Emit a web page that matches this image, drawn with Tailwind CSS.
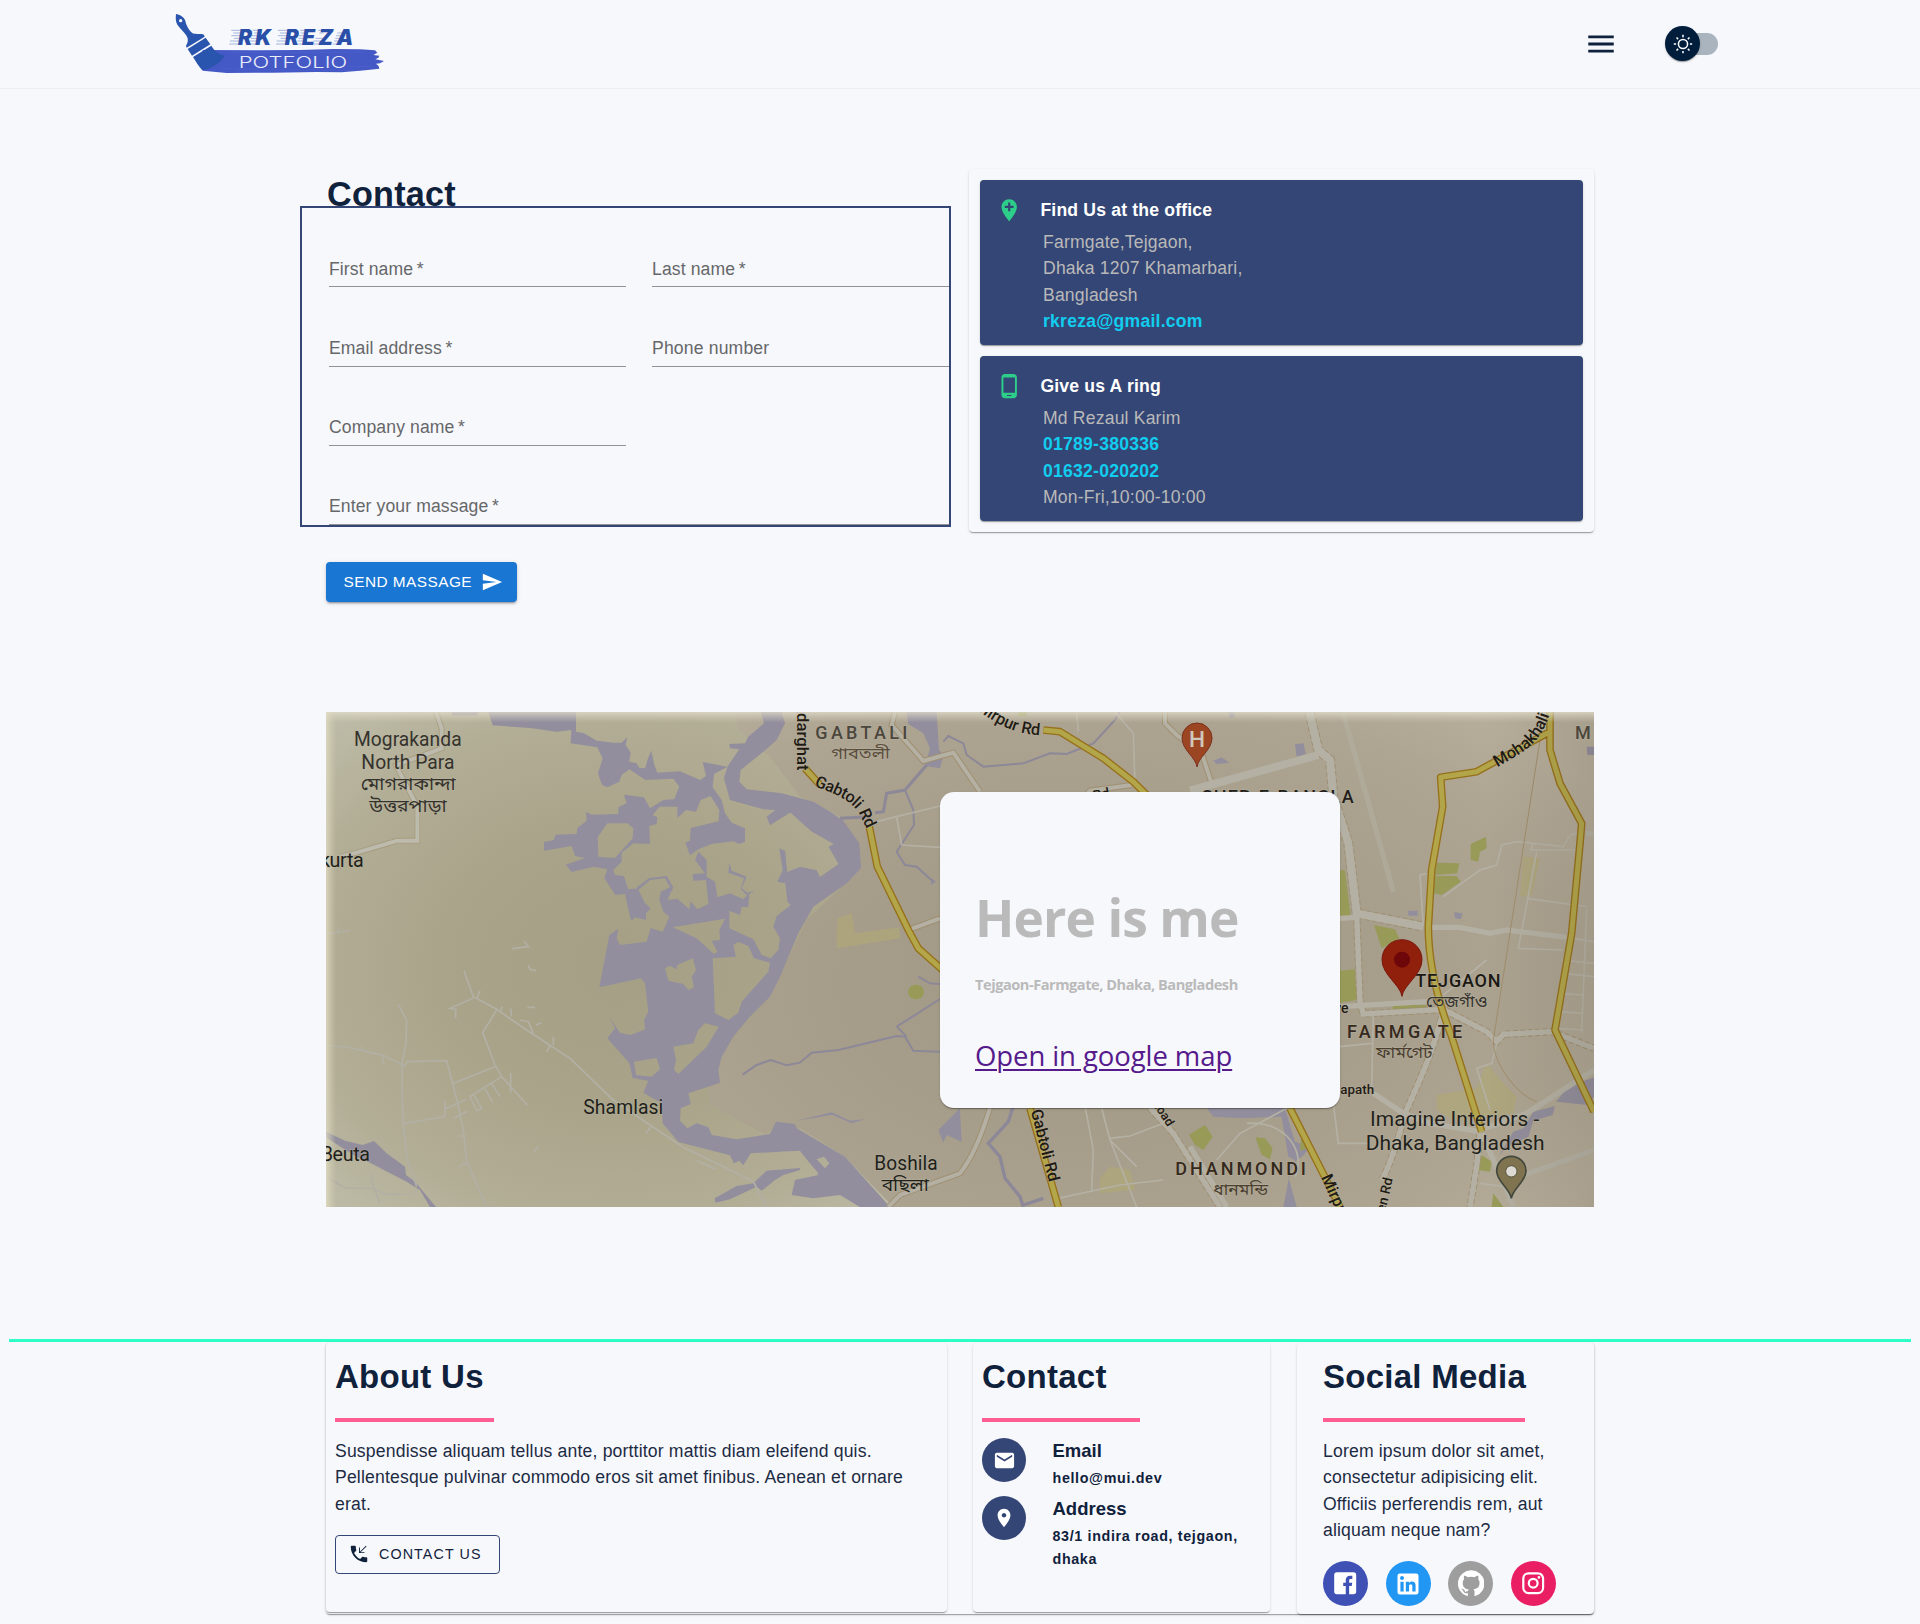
<!DOCTYPE html>
<html lang="en">
<head>
<meta charset="utf-8">
<title>Contact</title>
<script src="https://cdn.jsdelivr.net/npm/@tailwindcss/browser@4"></script>
</head>
<body class="bg-[#f7f8fc] text-[#10213b] font-['Liberation_Sans',Arial,sans-serif] text-[17.6px] leading-[26.4px] tracking-[0.01em] min-h-[1624px] overflow-x-hidden">

<header class="flex h-[89px] items-center justify-between border-b border-[#eceef3] pl-[160px] pr-[202px]">
  <svg class="h-[88px] w-[260px]" viewBox="0 0 780 264">
    <path fill="#4559c6" d="M128 150 L300 151 L420 150 L520 147 L600 148 L645 151 L652 158 L640 165 L658 167 L655 173 L646 178 L672 183 L660 190 L648 191 L656 198 L658 206 L630 209 L600 212 L545 217 L470 216 L340 218 L200 219 L128 212 Z"/>
    <path stroke="#5368d2" stroke-width="2" opacity=".6" d="M200 158H560M230 210H600M560 200H640M180 206H300M400 156H620"/>
    <path fill="#2a55ae" d="M48 42 C58 44 72 50 76 62 C78 75 88 92 98 100 C110 104 122 100 132 104 L134 110 L80 143 L78 137 C84 128 86 118 80 108 C72 94 60 86 52 74 C46 64 47 52 48 42 Z"/>
    <circle cx="62" cy="62" r="5" fill="#f7f8fc"/>
    <path fill="#2a55ae" d="M83 147 L137 113 L151 133 L96 167 Z M99 171 L154 137 C164 154 180 166 195 166 C186 184 160 206 127 211 C116 200 108 184 99 171 Z"/>
    <path stroke="#7d97cf" stroke-width="2" d="M214 91H250M220 99H248M214 107H244M222 115H242M210 123H240M208 132H238M278 91H300M282 99H296M276 107H292M272 115H290M270 123H290M268 132H288M354 91H388M360 99H386M354 107H382M362 115H382M350 123H378M348 132H376M420 91H446M422 99H444M416 107H440M416 115H436M412 123H436M410 132H434M474 91H500M478 99H490M466 115H490M460 123H488M458 132H486M532 99H554M528 107H550M526 115H546M522 123H542M518 132H534"/>
    <g fill="#2a4fa8" font-family="Inter, sans-serif" font-weight="900" font-style="italic" font-size="63">
      <text x="234" y="134" textLength="100">RK</text>
      <text x="374" y="134" textLength="206">REZA</text>
    </g>
    <text x="236" y="205" fill="#e9ecfb" font-family="Inter, sans-serif" font-weight="300" font-size="48" textLength="326" lengthAdjust="spacingAndGlyphs">POTFOLIO</text>
  </svg>
  <div class="flex items-center">
    <svg class="mr-[44px] size-[34px] fill-[#10213b]" viewBox="0 0 24 24"><path d="M3 18h18v-2H3v2zm0-5h18v-2H3v2zm0-7v2h18V6H3z"/></svg>
    <div class="relative flex h-[36px] w-[56px] items-center justify-end">
      <div class="h-[22px] w-[44px] rounded-full bg-[#aab4be]"></div>
      <div class="absolute left-[3px] top-0 flex size-[35px] items-center justify-center rounded-full bg-[#001e3c] shadow-[0_2px_1px_-1px_rgba(0,0,0,.2),0_1px_1px_rgba(0,0,0,.14),0_1px_3px_rgba(0,0,0,.12)]">
        <svg class="size-[22px] fill-white" viewBox="0 0 20 20"><path d="M9.305 1.667V3.75h1.389V1.667h-1.39zm-4.707 1.95l-.982.982L5.09 6.072l.982-.982-1.473-1.473zm10.802 0L13.927 5.09l.982.982 1.473-1.473-.982-.982zM10 5.139a4.872 4.872 0 00-4.862 4.86A4.872 4.872 0 0010 14.862 4.872 4.872 0 0014.86 10 4.872 4.872 0 0010 5.139zm0 1.389A3.462 3.462 0 0113.471 10a3.462 3.462 0 01-3.473 3.472A3.462 3.462 0 016.527 10 3.462 3.462 0 0110 6.528zM1.665 9.305v1.39h2.083v-1.39H1.666zm14.583 0v1.39h2.084v-1.39h-2.084zM5.09 13.928L3.616 15.4l.982.982 1.473-1.473-.982-.982zm9.82 0l-.982.982 1.473 1.473.982-.982-1.473-1.473zM9.305 16.25v2.083h1.389V16.25h-1.39z"/></svg>
      </div>
    </div>
  </div>
</header>

<main class="mx-auto w-[1268px] pt-[80px]">
  <section class="-ml-[26px] flex h-[433px] items-start justify-between">
    <div class="w-[651px]">
      <h2 class="flex h-[37px] items-start pl-[27px] pt-[5px] text-[34.2px] font-bold leading-[41px] tracking-[0.007em]">Contact</h2>
      <form class="relative h-[321px] border-2 border-[#344675] bg-[#f7f8fc] pl-[27px] text-[#666769] tracking-[0.006em]">
        <div class="grid grid-cols-[297px_297px] gap-x-[26px] leading-[24px]">
          <label class="flex h-[79px] items-end border-b border-[#929397] pb-[5px]">First name&thinsp;*</label>
          <label class="flex h-[79px] items-end border-b border-[#929397] pb-[5px]">Last name&thinsp;*</label>
          <label class="flex h-[80px] items-end border-b border-[#929397] pb-[6px]">Email address&thinsp;*</label>
          <label class="flex h-[80px] items-end border-b border-[#929397] pb-[6px] tracking-[0.009em]">Phone number</label>
          <label class="flex h-[79px] items-end border-b border-[#929397] pb-[6px]">Company name&thinsp;*</label>
          <label class="col-span-2 flex h-[79px] items-end border-b border-[#929397] pb-[6px]">Enter your massage&thinsp;*</label>
        </div>
      </form>
      <button type="button" class="ml-[26px] mt-[35px] flex h-[40px] w-[191px] items-center rounded-[4px] bg-[#1976d2] pl-[17.6px] text-[15.4px] tracking-[0.44px] text-white shadow-[0_3px_1px_-2px_rgba(0,0,0,.2),0_2px_2px_rgba(0,0,0,.14),0_1px_5px_rgba(0,0,0,.12)]">SEND MASSAGE
        <svg class="ml-[8.8px] size-[22px] fill-white" viewBox="0 0 24 24"><path d="M2.01 21 23 12 2.01 3 2 10l15 2-15 2z"/></svg>
      </button>
    </div>

    <div class="flex w-[625px] flex-col gap-[11px] rounded-[4px] p-[11px] shadow-[0_2px_1px_-1px_rgba(0,0,0,.2),0_1px_1px_rgba(0,0,0,.14),0_1px_3px_rgba(0,0,0,.12)]">
      <div class="h-[165px] rounded-[4px] bg-[#344675] pl-[16px] pt-[17px] shadow-[0_2px_1px_-1px_rgba(0,0,0,.2),0_1px_1px_rgba(0,0,0,.14),0_1px_3px_rgba(0,0,0,.12)]">
        <div class="flex items-center gap-[18px]">
          <svg class="size-[26.4px] fill-[#2dce89]" viewBox="0 0 24 24"><path d="M12 2C8.14 2 5 5.14 5 9c0 5.25 7 13 7 13s7-7.75 7-13c0-3.86-3.14-7-7-7zm4 8h-3v3h-2v-3H8V8h3V5h2v3h3v2z"/></svg>
          <span class="font-bold text-white">Find Us at the office</span>
        </div>
        <div class="pl-[47px] pt-[5.5px] text-[#b9b9b9]">
          <p>Farmgate,Tejgaon,</p><p>Dhaka 1207 Khamarbari,</p><p>Bangladesh</p><p class="font-bold text-[#11cdef] tracking-[0.013em]">rkreza@gmail.com</p>
        </div>
      </div>
      <div class="h-[165px] rounded-[4px] bg-[#344675] pl-[16px] pt-[17px] shadow-[0_2px_1px_-1px_rgba(0,0,0,.2),0_1px_1px_rgba(0,0,0,.14),0_1px_3px_rgba(0,0,0,.12)]">
        <div class="flex items-center gap-[18px]">
          <svg class="size-[26.4px] fill-[#2dce89]" viewBox="0 0 24 24"><path d="M16 1H8C6.34 1 5 2.34 5 4v16c0 1.66 1.34 3 3 3h8c1.66 0 3-1.34 3-3V4c0-1.66-1.34-3-3-3zm-2 20h-4v-1h4v1zm3.25-3H6.75V4h10.5v14z"/></svg>
          <span class="font-bold text-white">Give us A ring</span>
        </div>
        <div class="pl-[47px] pt-[5.5px] text-[#b9b9b9]">
          <p>Md Rezaul Karim</p><p class="font-bold text-[#11cdef] tracking-[0.013em]">01789-380336</p><p class="font-bold text-[#11cdef] tracking-[0.013em]">01632-020202</p><p>Mon-Fri,10:00-10:00</p>
        </div>
      </div>
    </div>
  </section>

  <section class="relative mt-[110px] h-[495px]">
    <!-- Map units are a third of a pixel -->
    <svg class="block h-[495px] w-[1268px]" viewBox="18 36 3804 1485" font-family="Roboto, 'Noto Sans Bengali', sans-serif">
      <defs>
        <radialGradient id="land" gradientUnits="userSpaceOnUse" cx="900" cy="800" r="1250" gradientTransform="translate(0 160) scale(1 .8)">
          <stop offset="0" stop-color="#a5a085"/><stop offset=".4" stop-color="#a9a389"/><stop offset=".75" stop-color="#b2ad95"/><stop offset="1" stop-color="#bdbba7"/>
        </radialGradient>
        <radialGradient id="city" gradientUnits="userSpaceOnUse" cx="2300" cy="850" r="1800" gradientTransform="translate(0 340) scale(1 .6)">
          <stop offset="0" stop-color="#a09884"/><stop offset=".45" stop-color="#a69d8b"/><stop offset=".8" stop-color="#ada492"/><stop offset="1" stop-color="#b6ad9b"/>
        </radialGradient>
        <linearGradient id="top" x1="0" y1="0" x2="0" y2="1"><stop offset="0" stop-color="#e4dfce" stop-opacity=".75"/><stop offset="1" stop-color="#d8d2bd" stop-opacity="0"/></linearGradient>
        <linearGradient id="left" x1="0" y1="0" x2="1" y2="0"><stop offset="0" stop-color="#e4dfc6" stop-opacity=".75"/><stop offset="1" stop-color="#d8d2b4" stop-opacity="0"/></linearGradient>
        <linearGradient id="right" x1="0" y1="0" x2="1" y2="0"><stop offset="0" stop-color="#3b3323" stop-opacity="0"/><stop offset="1" stop-color="#3b3323" stop-opacity=".12"/></linearGradient>
        <path id="gab1" d="M1482 258 C1540 280 1600 300 1622 350 C1634 375 1640 385 1644 400"/>
        <path id="mir1" d="M1965 22 C2020 70 2090 108 2178 106"/>
        <path id="gab2" d="M2132 1232 L2190 1460"/>
        <path id="moh" d="M3532 202 C3600 160 3660 140 3690 40 L3694 10"/>
      </defs>
      <rect x="18" y="36" width="3804" height="1485" fill="url(#land)"/>
      <path fill="url(#city)" d="M1245 36 H3822 V1521 H1720 L1575 1370 L1440 1285 L1330 1300 L1170 1215 L1165 1160 L1220 1040 L1350 890 L1460 660 L1623 505 L1560 350 L1440 290 L1350 170 L1255 90 Z"/>

      <g fill="#928e9d">
        <path d="M395 36H478L470 46H397Z M505 36H768V95L792 100 830 122 880 128 905 128 922 112 917 135 932 158 928 185 950 190 958 204 975 205 984 175 994 152 1003 195 1012 218 1080 214 1140 240 1158 228 1148 186 1222 200 1182 222 1178 262 1205 300 1215 340 1235 368 1275 385 1275 425 1258 432 1240 424 1175 432 1135 448 1110 466 1096 428 1110 422 1112 384 1196 364 1198 330 1172 288 1142 300 1128 335 1098 330 1072 354 1072 320 1018 320 998 346 1012 352 1010 372 988 378 990 432 940 430 905 458 905 485 880 510 885 525 912 528 924 568 955 565 958 575 975 610 992 625 978 640 978 660 945 652 935 662 930 650 915 582 886 585 853 535 862 508 822 500 755 516 737 494 795 474 765 468 755 438 672 452 672 426 702 420 706 404 770 402 772 384 800 362 798 336 815 344 895 342 895 322 920 310 912 284 972 292 990 325 1030 300 1062 298 1078 260 1060 236 976 240 928 208 905 225 898 245 862 262 846 255 834 220 848 175 832 142 752 130 754 90 710 95 630 84 518 76Z"/>
        <path d="M1322 36 1385 36 1395 70 1370 120 1330 155 1262 210 1258 245 1280 268 1385 280 1480 305 1535 338 1570 362 1618 430 1623 505 1580 550 1480 620 1435 700 1380 830 1350 890 1290 950 1240 1010 1205 1070 1195 1110 1200 1148 1105 1180 1112 1212 1082 1225 1080 1262 1102 1285 1130 1270 1165 1282 1175 1305 1250 1318 1350 1302 1368 1265 1425 1272 1430 1285 1575 1370 1710 1521 1620 1521 1560 1485 1480 1495 1415 1485 1425 1440 1495 1425 1440 1352 1292 1360 1270 1396 1258 1382 1242 1390 1230 1366 1075 1326 1028 1270 1025 1210 970 1178 985 1142 938 1134 928 1090 862 1015 885 985 870 955 900 998 932 1005 975 988 972 960 985 935 975 850 962 835 838 862 868 705 895 687 890 715 900 735 980 725 992 684 1028 696 1048 650 1030 635 1018 600 1022 575 1050 562 1035 535 990 540 955 570 950 562 988 534 1040 528 1060 562 1042 600 1072 596 1108 628 1112 604 1132 628 1165 612 1158 540 1120 542 1118 522 1155 520 1125 480 1135 455 1160 480 1160 530 1185 545 1192 592 1230 580 1270 598 1288 578 1285 622 1265 620 1260 645 1228 632 1228 685 1300 718 1325 765 1352 775 1375 750 1380 715 1360 680 1370 648 1412 615 1402 605 1396 550 1372 545 1388 510 1378 445 1396 452 1402 515 1440 500 1490 510 1500 530 1555 492 1525 440 1540 432 1475 395 1455 378 1410 338 1350 376 1340 350 1366 330 1330 328 1230 300 1212 235 1222 200 1258 148 1230 145 1228 132 1275 130 1285 110 1332 70Z"/>
        <path d="M1228 488 1235 512 1280 530 1265 565 1282 578 1305 572 1280 585 1262 568 1272 535 1225 518Z M18 1295 75 1322 128 1335 162 1323 200 1360 255 1400 258 1425 285 1445 348 1521 330 1521 300 1470 260 1445 150 1388 100 1365 18 1312Z M1184 1495 1250 1458 1300 1450 1340 1412 1440 1404 1440 1410 1390 1425 1365 1440 1325 1472 1310 1460 1230 1498 1186 1508Z"/>
        <path d="M1760 36H1850L1857 150 1870 165 1860 205 1815 198 1830 145 1810 100 1765 72Z M1855 1290 1920 1225V1235L1925 1325 1880 1305 1870 1328Z M1430 1262 1535 1237 1590 1262 1635 1258 1595 1270 1537 1244Z M1835 535 1848 545 1832 555Z M2660 1225H2895L2925 1325 2968 1340 2952 1365 2915 1392 2890 1521H2930L2905 1430 2925 1380 2905 1370 2885 1250 2760 1255 2680 1250Z M2725 36H2740L2745 50 2730 55Z M2925 133 2950 130 2958 162 2930 170Z M2680 182 2705 172 2728 188 2690 192Z M3265 632H3293V647H3265Z M3402 637 3428 640 3422 658 3405 655Z M3800 140H3822V165H3802Z M3822 1132 3745 1160 3708 1205 3805 1215 3822 1190Z M3535 1370 3580 1295 3610 1285 3640 1235 3705 1218 3698 1245 3640 1262 3625 1310 3560 1340Z"/>
      </g>

      <g fill="url(#land)">
        <path d="M835 470 833 412 862 370 922 370 940 385 938 415 885 474Z M1058 682 1215 656 1198 690 1200 720 1175 722 1192 755 1182 762 1130 715Z M1178 775 1248 770 1240 735 1255 726 1285 738 1302 775 1350 788 1345 815 1265 905 1255 938 1225 960 1185 940Z M1035 805 1050 797 1070 808 1072 795 1118 775 1128 810 1115 830 1122 862 1105 870 1090 852 1045 842Z M1060 1040 1120 1030 1135 990 1155 970 1196 980 1160 1040 1075 1122 1062 1110 1068 1080Z M942 1085 1010 1074 1020 1108 995 1130 948 1125Z M1412 338 1455 378 1475 395 1540 432 1525 440 1555 492 1500 530 1490 510 1440 500 1402 515 1396 452 1378 445 1370 400Z M1490 1378 1512 1370 1528 1390 1515 1405Z M1380 1355 1440 1355 1495 1420 1478 1428 1440 1395Z"/>
      </g>

      <!-- canals -->
      <g fill="none" stroke="#8d8898" stroke-width="6">
        <path d="M1268 1124 1310 1095 1352 1080 1400 1096 1440 1088 1475 1058 1555 1050 1730 1008 1755 1010 1780 1052 1860 1055M1730 980 1860 897M1730 980 1760 1010"/>
        <path stroke-width="9" d="M1560 355 1650 350M1665 338 1690 335 1700 280 1755 270 1820 195"/>
        <path d="M1755 270 1780 330 1782 375 1730 455 1755 495 1790 500 1840 545M1795 830 1830 850 1860 852M1870 125 1885 108 1930 130 1940 165 1990 200 2110 190 2190 160 2240 162 2320 130 2385 60 2398 36"/>
        <path stroke-width="10" d="M2078 1223 2065 1265 2005 1330 2040 1370 2055 1435 2100 1490 2110 1521M2110 1515 2170 1495"/>
      </g>

      <!-- parks -->
      <g fill="#989b58">
        <ellipse cx="1788" cy="876" rx="24" ry="22"/>
        <path d="M2607 1305 2630 1290 2655 1275 2678 1310 2650 1350 2625 1335Z M2806 1312 2835 1315 2858 1345 2850 1378 2825 1365Z M3060 510H3075L3092 650 3060 650Z M3060 812 3105 808 3110 900 3060 908Z M3350 488 3418 490 3412 520 3345 525Z M3340 528 3410 528 3422 545 3365 585 3340 580Z M3452 432 3498 410 3500 445 3480 455 3475 485 3452 480Z M3162 675 3225 688 3238 715 3185 745Z M3218 915H3320V925L3218 930Z M2945 1290 2965 1345 2940 1352Z M3485 1365 3515 1385 3510 1415 3475 1410Z M3520 1480 3550 1521H3515Z M2095 36H2120V48H2095Z"/>
      </g>
      <g fill="#afa778" opacity=".75">
        <path d="M1552 655 1595 640 1605 700 1738 682 1740 715 1550 745Z M2340 1435 2370 1400 2430 1410 2445 1470 2340 1480Z M3610 470 3660 475 3635 585 3600 590Z M3350 1185 3470 1165 3500 1090 3550 1150 3590 1190 3580 1240 3400 1260 3350 1230Z"/>
      </g>

      <!-- village lanes -->
      <g fill="none" stroke="#b2b0a5" stroke-width="5">
        <path d="M18 702 90 692M54 680V696M577 746 625 740 612 724M625 796 630 808 648 812M432 812 460 890 530 928 620 990 750 1075 880 1200 990 1275 1095 1345 1200 1395 1300 1445 1340 1521M460 894 390 925 407 928V955M530 930 488 998 525 1095 545 1130 622 1215M395 1152 525 1100M545 1130 450 1190 470 1232 485 1225 460 1182M235 914 260 960 258 1030 246 1090V1180L250 1272 262 1380 290 1460M18 1035 85 1042 190 1066 255 1098 262 1085 380 1082 412 1205 430 1290 440 1385 500 1521M250 1270 375 1250M375 1250V1202M375 1228 438 1198M400 1255 442 1234M18 1430 75 1464 160 1465 195 1483 275 1482 292 1470M152 1418 160 1460 180 1510M546 920 540 940M572 925 575 950M600 960 625 965 640 1000M664 968 648 975M700 1010V1035M680 1055 692 1035M480 872 470 898M495 1165 518 1208M515 1150 540 1190M572 1118V1180M125 1040 132 1055M188 1090 190 1066M415 1308H430M415 1402 440 1388M622 922H645M655 1338 642 1355M1130 1382 1188 1408M995 1278 978 1300"/>
        <path stroke="#a89c7e" stroke-width="17" d="M348 36 365 85V145L228 196 292 320V422H232L110 458 60 470"/>
        <path stroke="#bdbbae" stroke-width="12" d="M348 36 365 85V145L228 196 292 320V422H232L110 458 60 470"/>
      </g>

      <!-- minor streets -->
      <g fill="none" stroke="#b4b1a4">
        <path stroke-width="18" stroke="#a08f70" d="M1725 36 1715 75 1810 183 1900 158 1980 275M2535 36V70L2570 105 2645 160 2680 265M2010 1223C1990 1290 1960 1370 1920 1420L1740 1485 1705 1521M2260 325 2310 272 2435 255M1770 688 1860 655"/>
        <path stroke-width="12" d="M1725 36 1715 75 1810 183 1900 158 1980 275M2535 36V70L2570 105 2645 160 2680 265M2010 1223C1990 1290 1960 1370 1920 1420L1740 1485 1705 1521M2260 325 2310 272 2435 255M1770 688 1860 655"/>
        <g stroke="#9f8f72" stroke-dasharray="14 8">
          <path stroke-width="30" d="M2968 36 2995 150 3030 180 3040 290 3085 430 3110 640 3310 680"/>
          <path stroke-width="22" d="M2995 165 2610 272M3110 640 3120 905 3130 942 3370 928 3500 995 3530 1025 3550 1003 3695 995 3822 1045M3370 930C3340 1060 3290 1160 3255 1240 3240 1300 3210 1400 3185 1440M2490 1223 2560 1300 2700 1521M3480 1300 3470 1400 3450 1521"/>
        </g>
        <path stroke-width="24" d="M2968 36 2995 150 3030 180 3040 290 3085 430 3110 640 3310 680M2995 165 2610 272"/>
        <path stroke-width="16" d="M3110 640 3120 905 3130 942 3370 928 3500 995 3530 1025 3550 1003 3695 995 3822 1045M3060 655 3110 652M3330 682 3420 682 3510 700 3560 690 3740 712M3060 920 3320 905M3370 930C3340 1060 3290 1160 3255 1240 3240 1300 3210 1400 3185 1440M3160 1180 3250 1240 3330 1270 3480 1295M3480 1290 3620 1240 3822 1110M3480 1300 3470 1400 3450 1521M3485 1300 3560 1470 3580 1521M3600 1430 3822 1350M2490 1223 2560 1300 2700 1521M2610 1340 2720 1521M3800 400H3822"/>
        <path stroke-width="16" opacity=".5" d="M3070 40 3220 575"/>
        <path stroke-width="5" d="M1650 370 1720 352 1860 318M1730 352 1745 435 1860 442M2296 1223 2320 1350 2315 1470M2345 1225 2370 1320 2450 1400M2368 1315 2430 1308 2530 1270M2370 1320 2450 1521M2200 1498 2400 1455 2530 1440M2270 36 2275 95M2385 36 2440 100 2445 260M3320 520 3300 525 3310 680M3370 590 3480 510 3530 495 3545 435 3590 425 3730 440 3750 405 3780 398M3640 430 3632 450H3770M3650 455 3595 745 3730 750M3620 595 3800 620M3740 712 3822 725M3725 780 3822 790M3730 820 3822 830M3720 880 3790 885M3710 935 3790 940M3700 985 3790 990M3800 625 3785 1000M3160 942 3155 1170M3370 885 3500 780M3530 1030 3515 1090 3470 1105 3510 1230M3040 1210 3055 1330 3150 1330M2900 1225 2760 1300 2690 1380M2780 1270C2900 1260 2960 1360 2925 1430M3480 1450 3550 1460M3060 1040 3155 1030"/>
        <path stroke-width="3" stroke="#a18e6d" d="M3660 120 3520 1020C3520 1100 3600 1190 3650 1205"/>
      </g>

      <!-- arterial roads -->
      <g fill="none" stroke-linejoin="round">
        <g stroke="#96701a" stroke-width="23">
          <path d="M1455 205 1500 255M1648 380 1672 500 1765 690 1795 745 1870 812M2170 90 2220 95 2350 175 2440 245 2480 285M3690 36V150L3720 250 3785 370 3780 430 3755 700 3705 990 3822 1235M3690 95 3525 185 3470 215 3362 232 3368 320 3335 510 3325 680C3325 800 3360 920 3395 1010L3485 1295M2130 1225 2215 1521M2910 1225 3060 1521"/>
        </g>
        <g stroke="#b3a64a" stroke-width="15">
          <path d="M1455 205 1500 255M1648 380 1672 500 1765 690 1795 745 1870 812M2170 90 2220 95 2350 175 2440 245 2480 285M3690 36V150L3720 250 3785 370 3780 430 3755 700 3705 990 3822 1235M3690 95 3525 185 3470 215 3362 232 3368 320 3335 510 3325 680C3325 800 3360 920 3395 1010L3485 1295M2130 1225 2215 1521M2910 1225 3060 1521"/>
        </g>
      </g>

      <rect x="3500" y="36" width="322" height="1485" fill="url(#right)"/>
      <rect x="18" y="36" width="3804" height="32" fill="url(#top)"/>
      <rect x="18" y="36" width="30" height="1485" fill="url(#left)"/>

      <!-- labels -->
      <g fill="#34322c" font-size="59" stroke="#bbb6a2" stroke-opacity=".45" stroke-width="4" paint-order="stroke">
        <text x="102" y="139" textLength="323" lengthAdjust="spacingAndGlyphs">Mograkanda</text>
        <text x="124" y="206" textLength="280" lengthAdjust="spacingAndGlyphs">North Para</text>
        <text x="122" y="270" font-size="54" textLength="285" lengthAdjust="spacingAndGlyphs">মোগরাকান্দা</text>
        <text x="148" y="336" font-size="54" textLength="232" lengthAdjust="spacingAndGlyphs">উত্তরপাড়া</text>
        <g fill="#211f1b">
          <text x="130" y="501" text-anchor="end" letter-spacing="-1">kurta</text>
          <text x="149" y="1384" text-anchor="end" letter-spacing="-1">Beuta</text>
          <text x="790" y="1243" textLength="240" lengthAdjust="spacingAndGlyphs">Shamlasi</text>
          <text x="1663" y="1410" textLength="190" lengthAdjust="spacingAndGlyphs">Boshila</text>
          <text x="1685" y="1473" font-size="52" textLength="142" lengthAdjust="spacingAndGlyphs">বছিলা</text>
          <text x="3150" y="1279" font-size="62" textLength="508" lengthAdjust="spacingAndGlyphs">Imagine Interiors -</text>
          <text x="3137" y="1349" font-size="62" textLength="537" lengthAdjust="spacingAndGlyphs">Dhaka, Bangladesh</text>
        </g>
        <g font-weight="500" font-size="54">
          <text x="1486" y="117" fill="#4b463d" textLength="276">GABTALI</text>
          <text x="2566" y="1425" fill="#35291d" textLength="392">DHANMONDI</text>
          <text x="2645" y="310" fill="#211f1b" textLength="456">SHER-E-BANGLA</text>
          <text x="3286" y="862" fill="#1b1814" textLength="256">TEJGAON</text>
          <text x="3081" y="1013" fill="#35291d" textLength="346">FARMGATE</text>
          <text x="3765" y="116" fill="#4b463d">M</text>
        </g>
        <g font-size="48">
          <text x="1534" y="177" fill="#5a4d3d" textLength="176" lengthAdjust="spacingAndGlyphs">গাবতলী</text>
          <text x="2680" y="1486" fill="#4b3f30" textLength="164" lengthAdjust="spacingAndGlyphs">ধানমন্ডি</text>
          <text x="3318" y="922" textLength="184" lengthAdjust="spacingAndGlyphs">তেজগাঁও</text>
          <text x="3168" y="1073" fill="#4b3f30" textLength="170" lengthAdjust="spacingAndGlyphs">ফার্মগেট</text>
        </g>
        <g font-size="49" font-weight="500" fill="#1f1b14">
          <text transform="translate(1432 12) rotate(90)" textLength="200" lengthAdjust="spacingAndGlyphs">adarghat</text>
          <text letter-spacing="-1.5"><textPath href="#gab1">Gabtoli Rd</textPath></text>
          <text letter-spacing="0"><textPath href="#mir1">Mirpur Rd</textPath></text>
          <text letter-spacing="-.5"><textPath href="#gab2">Gabtoli Rd</textPath></text>
          <text letter-spacing="0"><textPath href="#moh">Mohakhali</textPath></text>
          <text transform="translate(2495 1208) rotate(57)" font-size="38">Road</text>
          <text transform="translate(3003 1432) rotate(66)">Mirpur Rd</text>
          <text transform="translate(3190 1560) rotate(-77)" font-size="41">een Rd</text>
          <text x="3086" y="940" text-anchor="end" font-size="42">Ave</text>
          <text x="3163" y="1182" text-anchor="end" font-size="40">Janapath</text>
          <text transform="translate(2322 302) rotate(-12)" font-size="42">Rd</text>
        </g>
      </g>

      <!-- pins -->
      <path fill="#9c4522" stroke="#7c2f1c" stroke-width="3" d="M2631 201C2628 172 2586 150 2586 114A45 45 0 0 1 2676 114C2676 150 2634 172 2631 201Z"/>
      <text x="2631" y="142" text-anchor="middle" font-size="68" font-weight="500" fill="#cfc8ba">H</text>
      <path fill="#901f0b" stroke="#7a170c" stroke-width="3" d="M3246 889C3242 855 3186 825 3186 779A60 60 0 0 1 3306 779C3306 825 3250 855 3246 889Z"/>
      <circle cx="3246" cy="779" r="24" fill="#6d0709"/>
      <path fill="#80734f" stroke="#43483c" stroke-width="5" d="M3574 1495C3570 1465 3530 1445 3530 1413A44 44 0 0 1 3618 1413C3618 1445 3578 1465 3574 1495Z"/>
      <circle cx="3574" cy="1414" r="17" fill="#dcdad3" stroke="#55543f" stroke-width="3"/>
    </svg>

    <div class="absolute left-[614px] top-[80px] flex h-[316px] w-[400px] flex-col items-start rounded-[14px] bg-[#f7f8fc] pl-[35px] pt-[87px] font-['Open_Sans','Noto_Sans',sans-serif] shadow-[0_2px_1px_-1px_rgba(0,0,0,.2),0_1px_1px_rgba(0,0,0,.14),0_1px_3px_rgba(0,0,0,.12)]">
      <h1 class="whitespace-nowrap text-[51.5px] font-bold leading-[76px] tracking-[-0.018em] text-[#bababa]">Here is me</h1>
      <p class="mt-[17px] whitespace-nowrap text-[14.6px] font-bold leading-[24px] tracking-[-0.032em] text-[#bababa]">Tejgaon-Farmgate, Dhaka, Bangladesh</p>
      <a class="mt-[40px] whitespace-nowrap text-[27.5px] leading-[40px] tracking-[-0.003em] text-[#551a8b] underline decoration-2 underline-offset-[3px]">Open in google map</a>
    </div>
  </section>
</main>

<footer class="mx-[9px] mt-[132px] border-t-[3px] border-[#2effc7]">
  <div class="mx-auto flex h-[272px] w-[1268px] items-start rounded-[4px] pt-px shadow-[0_2px_1px_-1px_rgba(0,0,0,.2),0_1px_1px_rgba(0,0,0,.14),0_1px_3px_rgba(0,0,0,.12)]">
    <div class="h-[269px] w-[621px] rounded-[4px] pl-[9px] pt-[14px] shadow-[0_2px_1px_-1px_rgba(0,0,0,.2),0_1px_1px_rgba(0,0,0,.14),0_1px_3px_rgba(0,0,0,.12)]">
      <h3 class="text-[33px] font-bold leading-[40px] tracking-[0.008em]">About Us</h3>
      <div class="mt-[21px] h-[4px] w-[159px] bg-[#ff5e95]"></div>
      <p class="mt-[16px] w-[600px] text-[#1c2b43] tracking-[0.0095em]">Suspendisse aliquam tellus ante, porttitor mattis diam eleifend quis.<br>Pellentesque pulvinar commodo eros sit amet finibus. Aenean et ornare<br>erat.</p>
      <button type="button" class="mt-[17.5px] flex h-[39px] w-[165px] items-center rounded-[4px] border border-[#344675] pl-[12px] text-[14.3px] tracking-[1.1px]">
        <svg class="mr-[9px] size-[22px] fill-[#10213b]" viewBox="0 0 24 24"><path d="M20 15.5c-1.25 0-2.45-.2-3.57-.57-.1-.03-.21-.05-.31-.05-.26 0-.51.1-.71.29l-2.2 2.2c-2.83-1.44-5.15-3.75-6.59-6.58l2.2-2.21c.28-.27.36-.66.25-1.01C8.7 6.45 8.5 5.25 8.5 4c0-.55-.45-1-1-1H4c-.55 0-1 .45-1 1 0 9.39 7.61 17 17 17 .55 0 1-.45 1-1v-3.5c0-.55-.45-1-1-1zM20.200 3.700l-.7-.7L13 9.500V5h-1v6h6v-1h-4.300z"/></svg>CONTACT US
      </button>
    </div>

    <div class="ml-[26px] h-[269px] w-[297px] rounded-[4px] pl-[9px] pt-[14px] shadow-[0_2px_1px_-1px_rgba(0,0,0,.2),0_1px_1px_rgba(0,0,0,.14),0_1px_3px_rgba(0,0,0,.12)]">
      <h3 class="text-[33px] font-bold leading-[40px] tracking-[0.008em]">Contact</h3>
      <div class="mt-[21px] h-[4px] w-[158px] bg-[#ff5e95]"></div>
      <div class="mt-[16px] flex gap-[26.5px]">
        <div class="flex size-[44px] shrink-0 items-center justify-center rounded-full bg-[#344675]"><svg class="size-[23px] fill-white" viewBox="0 0 24 24"><path d="M20 4H4c-1.100 0-2 .9-2 2v12c0 1.100.9 2 2 2h16c1.100 0 2-.9 2-2V6c0-1.100-.9-2-2-2zm0 4-8 5-8-5V6l8 5 8-5v2z"/></svg></div>
        <div class="font-bold"><p class="text-[18.5px] leading-[26px] tracking-normal">Email</p><p class="mt-[3px] text-[14.3px] leading-[22.3px] tracking-[0.65px]">hello@mui.dev</p></div>
      </div>
      <div class="mt-[7px] flex gap-[26.5px]">
        <div class="flex size-[44px] shrink-0 items-center justify-center rounded-full bg-[#344675]"><svg class="size-[22px] fill-white" viewBox="0 0 24 24"><path d="M12 2C8.130 2 5 5.130 5 9c0 5.250 7 13 7 13s7-7.750 7-13c0-3.870-3.130-7-7-7zm0 9.500c-1.380 0-2.500-1.120-2.500-2.500s1.120-2.500 2.500-2.500 2.500 1.120 2.500 2.500-1.120 2.500-2.500 2.500z"/></svg></div>
        <div class="font-bold"><p class="text-[18.5px] leading-[26px] tracking-normal">Address</p><p class="mt-[3px] text-[14.3px] leading-[22.3px] tracking-[0.65px]">83/1 indira road, tejgaon,<br>dhaka</p></div>
      </div>
    </div>

    <div class="ml-[27px] h-[271px] w-[297px] rounded-[4px] pl-[26px] pt-[14px] shadow-[0_2px_1px_-1px_rgba(0,0,0,.2),0_1px_1px_rgba(0,0,0,.14),0_1px_3px_rgba(0,0,0,.12)]">
      <h3 class="text-[33px] font-bold leading-[40px] tracking-[0.008em]">Social Media</h3>
      <div class="mt-[21px] h-[4px] w-[202px] bg-[#ff5e95]"></div>
      <p class="mt-[16px] text-[#1c2b43] tracking-[0.0095em]">Lorem ipsum dolor sit amet,<br>consectetur adipisicing elit.<br>Officiis perferendis rem, aut<br>aliquam neque nam?</p>
      <div class="mt-[17.5px] flex gap-[17.7px]">
        <span class="flex size-[45px] items-center justify-center rounded-full bg-[#3f51b5]"><svg class="size-[26.4px] fill-white" viewBox="0 0 24 24"><path d="M19.500 2h-15A2.500 2.500 0 0 0 2 4.500v15A2.500 2.500 0 0 0 4.500 22H12.500v-7.500H10.200v-3h2.300V9.300C12.500 6.700 14 5.300 16.300 5.300h2.200v2.900h-1.400c-1.200 0-1.500.6-1.500 1.500v1.800h2.800l-.5 3h-2.300V22h3.900a2.500 2.500 0 0 0 2.500-2.500v-15A2.500 2.500 0 0 0 19.500 2z"/></svg></span>
        <span class="flex size-[45px] items-center justify-center rounded-full bg-[#2196f3]"><svg class="size-[28px] fill-white" viewBox="0 0 24 24"><path d="M19 3a2 2 0 0 1 2 2v14a2 2 0 0 1-2 2H5a2 2 0 0 1-2-2V5a2 2 0 0 1 2-2h14m-.5 15.500v-5.300a3.260 3.260 0 0 0-3.260-3.260c-.85 0-1.840.52-2.320 1.300v-1.110h-2.790v8.370h2.790v-4.930c0-.77.62-1.400 1.390-1.400a1.400 1.400 0 0 1 1.400 1.400v4.930h2.790M6.880 8.560a1.680 1.680 0 0 0 1.680-1.680c0-.93-.75-1.690-1.680-1.690a1.690 1.690 0 0 0-1.690 1.690c0 .93.76 1.680 1.690 1.680m1.390 9.940v-8.370H5.500v8.370h2.770z"/></svg></span>
        <span class="flex size-[45px] items-center justify-center rounded-full bg-[#9e9e9e]"><svg class="size-[26.4px] fill-white" viewBox="0 0 24 24"><path d="M12 .3a12 12 0 0 0-3.800 23.400c.6.1.8-.3.8-.6v-2c-3.300.7-4-1.600-4-1.600-.6-1.400-1.400-1.800-1.400-1.800-1-.7.1-.7.1-.7 1.200 0 1.900 1.200 1.900 1.200 1 1.800 2.800 1.300 3.500 1 0-.8.4-1.300.7-1.600-2.700-.3-5.500-1.300-5.500-6 0-1.200.5-2.300 1.300-3.100-.2-.4-.6-1.600 0-3.200 0 0 1-.3 3.400 1.200a11.500 11.500 0 0 1 6 0c2.300-1.500 3.300-1.200 3.300-1.200.6 1.600.2 2.800 0 3.200.9.8 1.300 1.900 1.300 3.200 0 4.600-2.800 5.600-5.500 5.900.5.400.9 1 .9 2.200v3.300c0 .3.1.7.8.6A12 12 0 0 0 12 .3"/></svg></span>
        <span class="flex size-[45px] items-center justify-center rounded-full bg-[#e91e63]"><svg class="size-[26.4px] fill-white" viewBox="0 0 24 24"><path d="M7.800 2h8.400C19.400 2 22 4.600 22 7.800v8.400a5.800 5.800 0 0 1-5.800 5.800H7.800C4.600 22 2 19.400 2 16.200V7.800A5.800 5.800 0 0 1 7.800 2m-.2 2A3.600 3.600 0 0 0 4 7.600v8.800C4 18.390 5.610 20 7.600 20h8.800a3.600 3.600 0 0 0 3.600-3.600V7.600C20 5.610 18.390 4 16.400 4H7.600m9.650 1.500a1.250 1.250 0 1 1 0 2.500 1.250 1.250 0 0 1 0-2.500M12 7a5 5 0 1 1 0 10 5 5 0 0 1 0-10m0 2a3 3 0 1 0 0 6 3 3 0 0 0 0-6z"/></svg></span>
      </div>
    </div>
  </div>
</footer>
</body>
</html>
